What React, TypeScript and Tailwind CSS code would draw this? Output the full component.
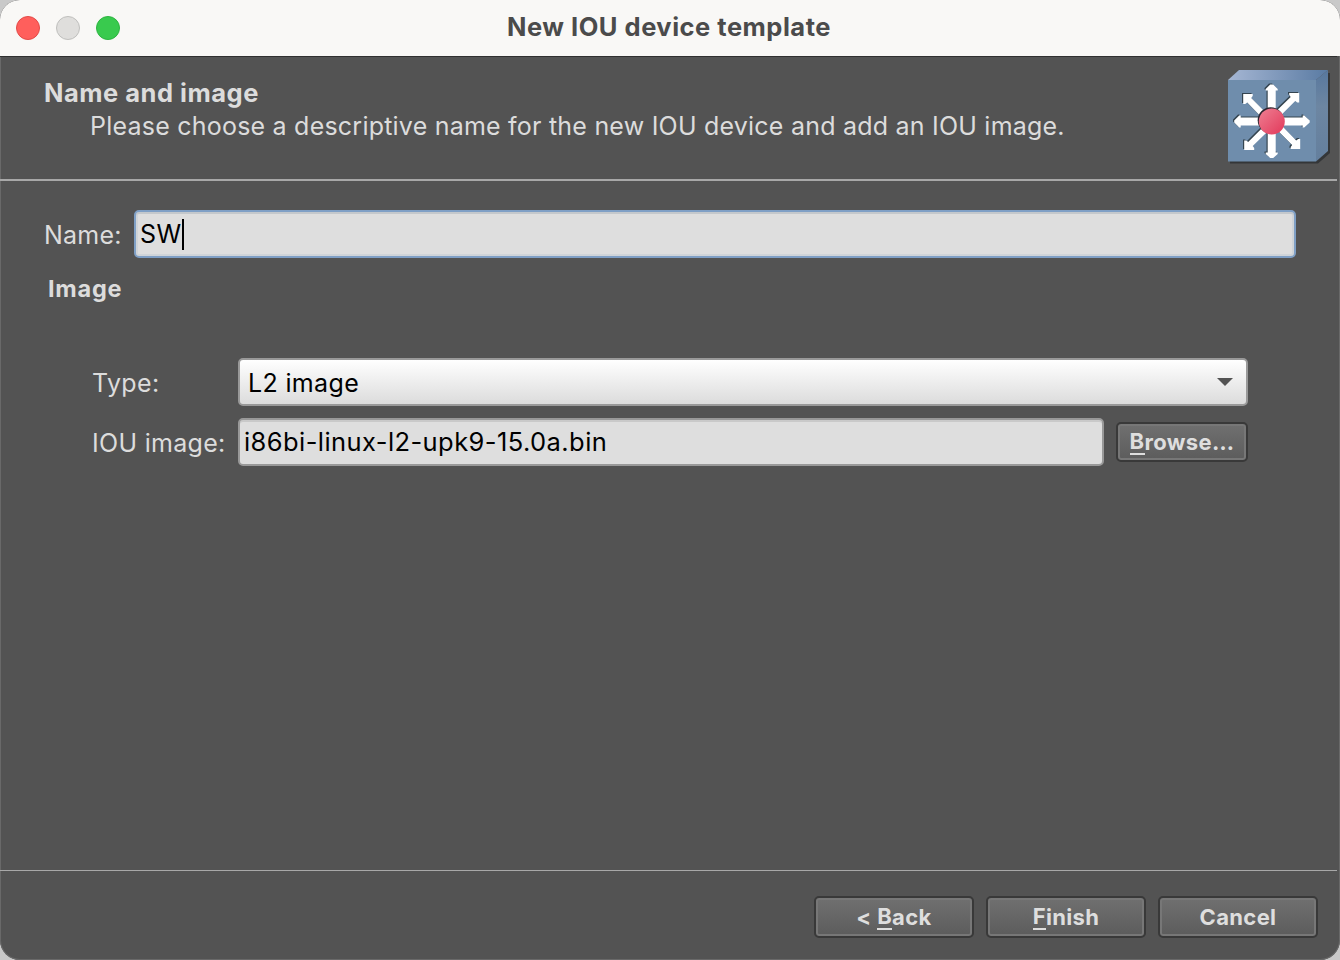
import type { ReactNode } from 'react';

const STRAIGHT_ARROWS = [
  { angle: 0, path: 'M-4 0V-31H-6V-32.500L-1.500 -37H1.500L6 -32.500V-31H4V0Z' },
  { angle: 90, path: 'M-4 0V-31H-6V-32.500L-1 -38H1L6 -32.500V-31H4V0Z' },
  { angle: 180, path: 'M-4 0V-31H-6V-32.500L-1.500 -36.500H1.500L6 -32.500V-31H4V0Z' },
  { angle: 270, path: 'M-4 0V-31H-6V-32.500L-1 -37.500H1L6 -32.500V-31H4V0Z' },
];
const DIAGONAL_ARROW =
  'M-28.500 -27.500H-19V-25.500L-20.500 -23.500L-3 -6L-7.500 -1.500L-24.500 -19L-26.500 -17.500H-28.500Z';
const QUARTER_TURNS = [0, 90, 180, 270];

function Arrows() {
  return (
    <>
      {STRAIGHT_ARROWS.map(({ angle, path }) => (
        <path key={angle} d={path} transform={`rotate(${angle})`} />
      ))}
      {QUARTER_TURNS.map((angle) => (
        <path key={angle} d={DIAGONAL_ARROW} transform={`rotate(${angle})`} />
      ))}
    </>
  );
}

function SwitchIcon() {
  return (
    <svg className="h-24 w-[104px] shrink-0" viewBox="0 0 104 96" aria-hidden="true">
      <defs>
        <linearGradient id="top" x1="0" x2="1">
          <stop offset="0" stopColor="#a5b6d3" />
          <stop offset="1" stopColor="#5a7ba3" />
        </linearGradient>
        <linearGradient id="side" x1="0" y1="0" x2="0" y2="1">
          <stop offset="0" stopColor="#58789e" />
          <stop offset="0.4" stopColor="#6d86a2" />
          <stop offset="1" stopColor="#647f9d" />
        </linearGradient>
        <linearGradient id="ball" x1="0" y1="0" x2="1" y2="1">
          <stop offset="0" stopColor="#ee7f92" />
          <stop offset="1" stopColor="#e2385a" />
        </linearGradient>
      </defs>
      <path d="M2 93.500H90L102 83V3H98V80L86 90H2Z" fill="#343638" />
      <path d="M0 10L11 0H100L88 10Z" fill="url(#top)" />
      <path d="M88 10L100 0V81L88 91.500Z" fill="url(#side)" />
      <rect y="10" width="88" height="81.500" fill="#6f8dac" />
      <g transform="translate(42.500 50.500)" fill="#34444f">
        <Arrows />
      </g>
      <g transform="translate(43.700 51.500)" fill="#fff">
        <Arrows />
      </g>
      <circle cx="42.700" cy="50.300" r="13" fill="#2b2530" />
      <circle cx="43.800" cy="51.500" r="13" fill="url(#ball)" />
    </svg>
  );
}

function PushButton({ className, children }: { className: string; children: ReactNode }) {
  return (
    <button
      className={`flex items-center justify-center rounded-[5px] border-2 border-[#393939] bg-linear-to-b from-[#707070] to-[#5c5c5c] text-[22px] leading-none font-bold tracking-[0.35px] whitespace-nowrap text-[#dedede] shadow-[inset_0_0_0_2px_#777777] ${className}`}
    >
      {children}
    </button>
  );
}

function Mnemonic({ children }: { children: ReactNode }) {
  return <span className="border-b-2 border-[#dedede] pb-px">{children}</span>;
}

export default function App() {
  return (
    <div className="h-[960px] w-[1340px] overflow-hidden bg-[#c9c9c9] font-['Inter','Liberation_Sans',sans-serif]">
      <div className="flex h-full flex-col overflow-hidden rounded-[20px] bg-[#535353] text-[25px] leading-8 tracking-[0.22px] text-[#dcdcdc] shadow-[inset_0_0_0_1px_#696969]">
        <header className="grid h-14 shrink-0 grid-cols-[1fr_auto_1fr] items-center bg-[#f9f8f6] px-4">
          <div className="flex gap-4">
            <span className="size-6 rounded-full border border-[#e24b48] bg-[#ff5f5c]" />
            <span className="size-6 rounded-full border border-[#bfbfbd] bg-[#dfdedc]" />
            <span className="size-6 rounded-full border border-[#2db440] bg-[#39ca4e]" />
          </div>
          <h1 className="pr-[2px] pb-0.5 text-[25.5px] font-bold tracking-[0.5px] whitespace-nowrap text-[#4b4b4b]">
            New IOU device template
          </h1>
        </header>

        <section className="mr-[3px] flex h-[125px] shrink-0 justify-between border-t border-b-2 border-t-[#303030] border-b-[#a8a8a8] pr-[5px] pl-11">
          <div className="pt-5">
            <h2 className="text-[25.5px] font-bold tracking-[0.5px] whitespace-nowrap">Name and image</h2>
            <p className="mt-px pl-[46px] whitespace-nowrap">
              Please choose a descriptive name for the new IOU device and add an IOU image.
            </p>
          </div>
          <div className="pt-[13px]">
            <SwitchIcon />
          </div>
        </section>

        <main className="flex grow flex-col pt-[29px] pr-11 pl-11">
          <div className="flex items-center">
            <label className="w-[90px] pt-0.5 whitespace-nowrap">Name:</label>
            <div className="flex h-12 grow items-center rounded-[5px] border-2 border-[#7f9fc5] bg-[#dedede] pl-1 text-black shadow-[inset_0_2px_0_#c4c8cc,inset_0_0_0_2px_#d0d4d8]">
              <span className="tracking-[0.5px]">SW</span>
              <span className="h-[31px] w-0.5 bg-black" />
            </div>
          </div>

          <h3 className="mt-[15px] pl-1 text-[23.5px] font-bold tracking-[0.75px]">Image</h3>

          <div className="mt-[53px] flex flex-col gap-3 pr-12 pl-12">
            <div className="flex items-center">
              <label className="w-[146px] pt-0.5 tracking-[0.35px] whitespace-nowrap">Type:</label>
              <div className="flex h-12 grow items-center justify-between rounded-[5px] border-2 border-[#999999] bg-linear-to-b from-white to-[#dcdcdc] pr-[13px] pl-2 text-black">
                <span className="pt-0.5 tracking-[0.35px]">L2 image</span>
                <svg className="h-2 w-4" viewBox="0 0 16 8" aria-hidden="true">
                  <path d="M0 0H16L8 8Z" fill="#535353" />
                </svg>
              </div>
            </div>
            <div className="flex items-center">
              <label className="w-[146px] pt-0.5 tracking-[0.3px] whitespace-nowrap">IOU image:</label>
              <div className="flex h-12 grow items-center rounded-[5px] border-2 border-[#999999] bg-[#dedede] pl-1 text-black shadow-[inset_0_2px_0_#c9c9c9]">
                <span className="text-[25.5px] tracking-[0.42px]">i86bi-linux-l2-upk9-15.0a.bin</span>
              </div>
              <PushButton className="ml-3 h-10 w-[132px]">
                <Mnemonic>B</Mnemonic>rowse…
              </PushButton>
            </div>
          </div>
        </main>

        <footer className="mr-[3px] flex h-[90px] shrink-0 justify-end gap-3 border-t border-[#a8a8a8] pt-[25px] pr-[19px]">
          <PushButton className="h-[42px] w-40">
            &lt;&nbsp;<Mnemonic>B</Mnemonic>ack
          </PushButton>
          <PushButton className="h-[42px] w-40">
            <Mnemonic>F</Mnemonic>inish
          </PushButton>
          <PushButton className="h-[42px] w-40">Cancel</PushButton>
        </footer>
      </div>
    </div>
  );
}
